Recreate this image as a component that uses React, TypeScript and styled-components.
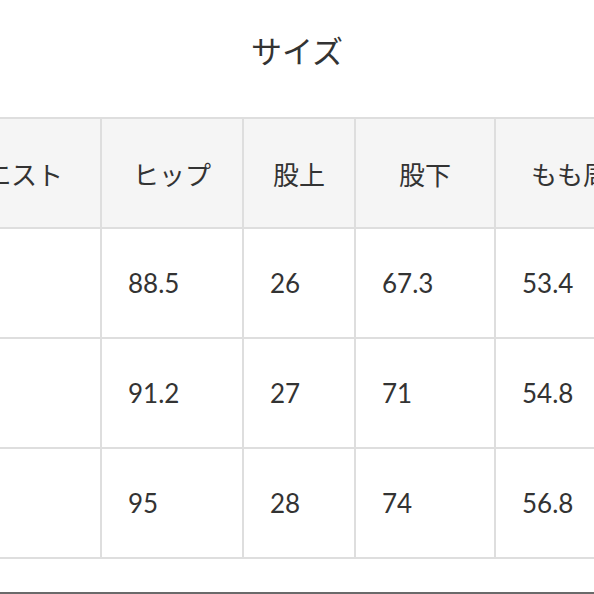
import React from "react";
import styled, { createGlobalStyle } from "styled-components";

const Global = createGlobalStyle`
  html, body { margin: 0; padding: 0; background: #fff; }
  body { font-family: "Noto Sans CJK JP", "Noto Sans", sans-serif; color: #333; }
`;

const Page = styled.div`
  width: 594px;
  height: 594px;
  overflow: hidden;
  display: flex;
  flex-direction: column;
  background: #fff;
`;

const Title = styled.h2`
  margin: 0;
  padding-top: 30px;
  height: 40px;
  line-height: 40px;
  font-size: 31px;
  font-weight: 400;
  text-align: center;
  color: #333;
  font-family: "Noto Sans CJK JP", sans-serif;
`;

const TableWrap = styled.div`
  margin-top: 47px;
  flex: none;
`;

const Table = styled.table`
  border-collapse: collapse;
  table-layout: fixed;
  margin-left: -80px;
  width: 750px;
`;

const Th = styled.th`
  height: 108px;
  padding: 0;
  border: 2px solid #dedede;
  background: #f5f5f5;
  font-weight: 400;
  font-size: 26px;
  color: #333;
  text-align: center;
  font-family: "Noto Sans CJK JP", sans-serif;
  white-space: nowrap;
`;

const Td = styled.td`
  height: 108px;
  padding: 0 0 0 26px;
  border: 2px solid #dedede;
  background: #fff;
  font-size: 26px;
  color: #333;
  text-align: left;
  font-family: Lato, "Noto Sans", sans-serif;
  white-space: nowrap;
`;

const Spacer = styled.div`
  flex: 1;
`;

const BottomRule = styled.div`
  height: 2px;
  background: #6a6a6a;
  flex: none;
`;

const widths = [180, 142, 112, 140, 176];
const headers = ["ウエスト", "ヒップ", "股上", "股下", "もも周り"];
const rows = [
  ["", "88.5", "26", "67.3", "53.4"],
  ["", "91.2", "27", "71", "54.8"],
  ["", "95", "28", "74", "56.8"],
];

export default function App() {
  return (
    <>
      <Global />
      <Page>
        <Title>サイズ</Title>
        <TableWrap>
          <Table>
            <colgroup>
              {widths.map((w, i) => (
                <col key={i} style={{ width: w }} />
              ))}
            </colgroup>
            <thead>
              <tr>
                {headers.map((h) => (
                  <Th key={h}>{h}</Th>
                ))}
              </tr>
            </thead>
            <tbody>
              {rows.map((r, i) => (
                <tr key={i}>
                  {r.map((c, j) => (
                    <Td key={j}>{c}</Td>
                  ))}
                </tr>
              ))}
            </tbody>
          </Table>
        </TableWrap>
        <Spacer />
        <BottomRule />
      </Page>
    </>
  );
}
